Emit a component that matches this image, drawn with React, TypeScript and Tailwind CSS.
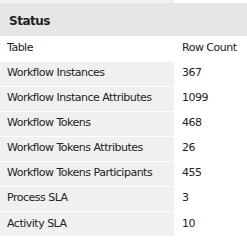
const rows: [string, string][] = [
  ["Workflow Instances", "367"],
  ["Workflow Instance Attributes", "1099"],
  ["Workflow Tokens", "468"],
  ["Workflow Tokens Attributes", "26"],
  ["Workflow Tokens Participants", "455"],
  ["Process SLA", "3"],
  ["Activity SLA", "10"],
];

export default function App() {
  return (
    <div className="h-[243px] w-[247px] overflow-hidden bg-white font-['DejaVu_Sans',sans-serif] text-[11px] tracking-[-0.5px] text-[#222]">
      <div className="h-[3px] w-[174px] bg-[#f0f0f0]" />
      <div className="flex h-[33px] items-center bg-[#e6e6e6] pl-[9px] pt-[2px] text-[12px] font-bold">
        Status
      </div>
      <table className="w-full border-collapse">
        <tbody>
          <tr className="h-[25px]">
            <td className="w-[174px] pl-[7px]">Table</td>
            <td className="pl-[8px]">Row Count</td>
          </tr>
          {rows.map(([name, count]) => (
            <tr key={name} className="h-[25px] border-t border-white">
              <td className="bg-[#f0f0f0] pl-[7px]">{name}</td>
              <td className="pl-[8px]">{count}</td>
            </tr>
          ))}
        </tbody>
      </table>
    </div>
  );
}
